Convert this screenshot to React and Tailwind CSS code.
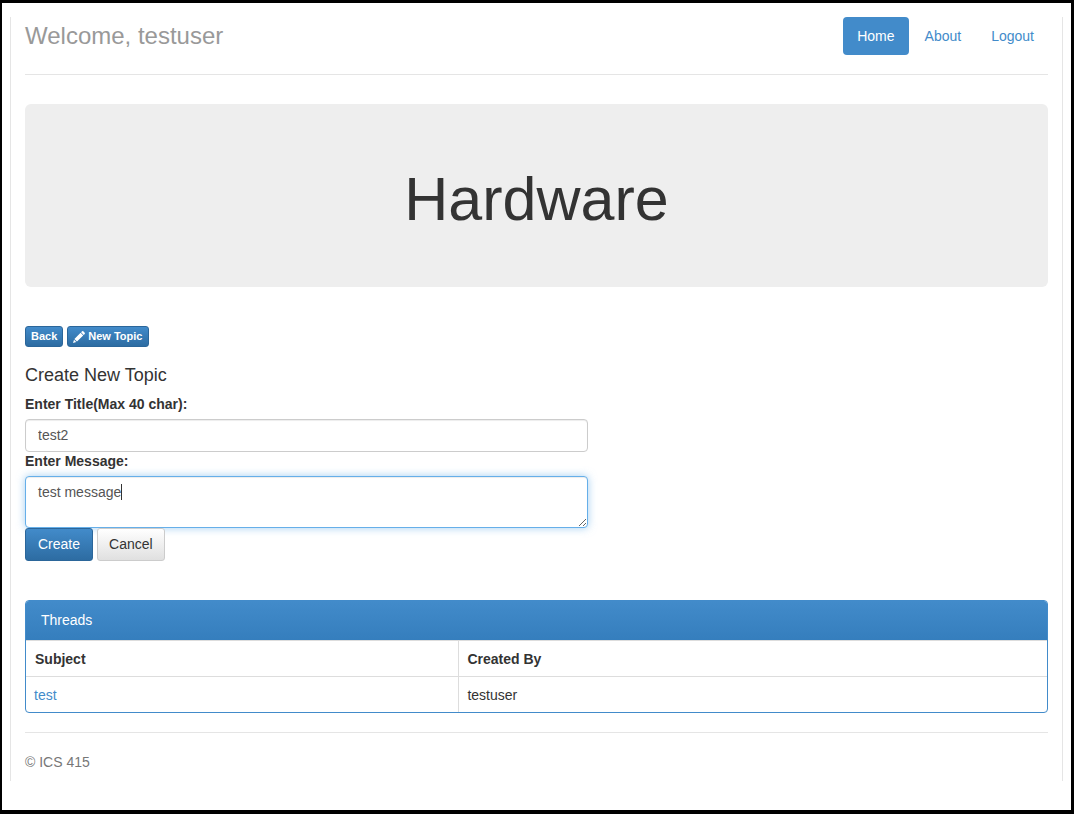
import React from "react";

const primaryButton =
  "rounded-[3px] border border-[#2b669a] bg-linear-to-b from-[#428bca] to-[#2d6ca2] text-white";

const navItems = [
  { label: "Home", active: true },
  { label: "About", active: false },
  { label: "Logout", active: false },
];

const threads = [{ subject: "test", author: "testuser" }];

function Header() {
  return (
    <header className="flex items-start justify-between border-b border-[#e5e5e5] pb-[19px]">
      <h3 className="pt-1 text-2xl leading-[30px] text-[#999999]">Welcome, testuser</h3>
      <nav className="flex gap-[2px]">
        {navItems.map((item) => (
          <a
            key={item.label}
            href="#"
            className={
              item.active
                ? "rounded bg-[#428bca] px-[14px] py-[9px] text-white"
                : "rounded px-[14px] py-[9px] text-[#428bca]"
            }
          >
            {item.label}
          </a>
        ))}
      </nav>
    </header>
  );
}

function TopicForm() {
  return (
    <form className="mt-[17px]" onSubmit={(event) => event.preventDefault()}>
      <h4 className="text-lg leading-[22px]">Create New Topic</h4>
      <label htmlFor="title" className="mt-2 block font-bold">
        Enter Title(Max 40 char):
      </label>
      <input
        id="title"
        type="text"
        maxLength={40}
        defaultValue="test2"
        className="mt-[5px] block h-[33px] w-[55%] rounded border border-[#cccccc] bg-white px-3 pb-[2px] text-[#555555] shadow-[inset_0_1px_1px_rgba(0,0,0,0.075)] outline-none"
      />
      <label htmlFor="message" className="block font-bold leading-[19px]">
        Enter Message:
      </label>
      <div className="relative mt-[5px]">
        <textarea
          id="message"
          rows={2}
          defaultValue="test message"
          className="block h-[52px] w-[55%] resize rounded border border-[#66afe9] bg-white px-3 py-[5px] text-[#555555] caret-transparent shadow-[inset_0_1px_1px_rgba(0,0,0,0.075),0_0_8px_rgba(102,175,233,0.6)] outline-none"
        />
        <span className="pointer-events-none absolute top-2 left-24 h-4 w-px bg-[#333333]" aria-hidden="true" />
      </div>
      <div className="relative flex gap-1">
        <button type="submit" className={`${primaryButton} px-3 py-[6px] leading-[19px]`}>
          Create
        </button>
        <button
          type="button"
          className="rounded-[3px] border border-[#cccccc] bg-linear-to-b from-white to-[#e0e0e0] px-[11px] py-[6px] leading-[19px]"
        >
          Cancel
        </button>
      </div>
    </form>
  );
}

function ThreadsPanel() {
  return (
    <section className="mt-[39px] overflow-hidden rounded border border-[#428bca]">
      <h3 className="bg-linear-to-b from-[#428bca] to-[#357ebd] px-[15px] pt-[9px] pb-[10px]">
        <span className="text-white">Threads</span>
      </h3>
      <table className="w-full table-fixed border-t border-[#dddddd] text-left">
        <colgroup>
          <col className="w-[42.4%]" />
          <col />
        </colgroup>
        <thead>
          <tr>
            <th className="border-r border-[#dddddd] px-[9px] pt-[9px] pb-[7px] leading-[19px]">Subject</th>
            <th className="px-2 pt-[9px] pb-[7px] leading-[19px]">Created By</th>
          </tr>
        </thead>
        <tbody>
          {threads.map((thread) => (
            <tr key={thread.subject} className="border-t border-[#dddddd]">
              <td className="border-r border-[#dddddd] px-2 pt-[9px] pb-[7px] leading-[19px]">
                <a href="#" className="text-[#428bca]">
                  {thread.subject}
                </a>
              </td>
              <td className="px-2 pt-[9px] pb-[7px] leading-[19px]">{thread.author}</td>
            </tr>
          ))}
        </tbody>
      </table>
    </section>
  );
}

export default function App() {
  return (
    <div className="min-h-screen border-t-[3px] border-r-[3px] border-b-4 border-l-2 border-black bg-white px-2 pt-[14px] pb-[29px] font-['Liberation_Sans',Arial,sans-serif] text-sm text-[#333333]">
      <div className="border-x border-[#e5e5e5] px-[14px]">
        <Header />
        <div className="mt-[29px] rounded-md bg-[#eeeeee] pt-[66px] pb-[58px] text-center">
          <h1 className="text-[61px] leading-[59px]">Hardware</h1>
        </div>
        <div className="mt-[39px] flex gap-1 text-[11px] font-bold leading-[17px]">
          <button type="button" className={`${primaryButton} px-[5px] py-px`}>
            Back
          </button>
          <button type="button" className={`${primaryButton} flex items-center gap-[3px] px-[5px] py-px`}>
            <svg viewBox="0 0 12 12" className="size-3" fill="currentColor" aria-hidden="true">
              <path d="M0 12 L1 8.7 L3.3 11 Z M1.4 8 L7.6 1.8 L10.2 4.4 L4 10.6 Z M8.1 1.3 L9.1 .3 Q9.7 -.2 10.3 .3 L11.7 1.7 Q12.2 2.3 11.7 2.9 L10.7 3.9 Z" />
            </svg>
            New Topic
          </button>
        </div>
        <TopicForm />
        <ThreadsPanel />
        <footer className="mt-[19px] border-t border-[#e5e5e5] pt-[19px] pb-[9px] text-[#777777]">
          <p>© ICS 415</p>
        </footer>
      </div>
    </div>
  );
}
